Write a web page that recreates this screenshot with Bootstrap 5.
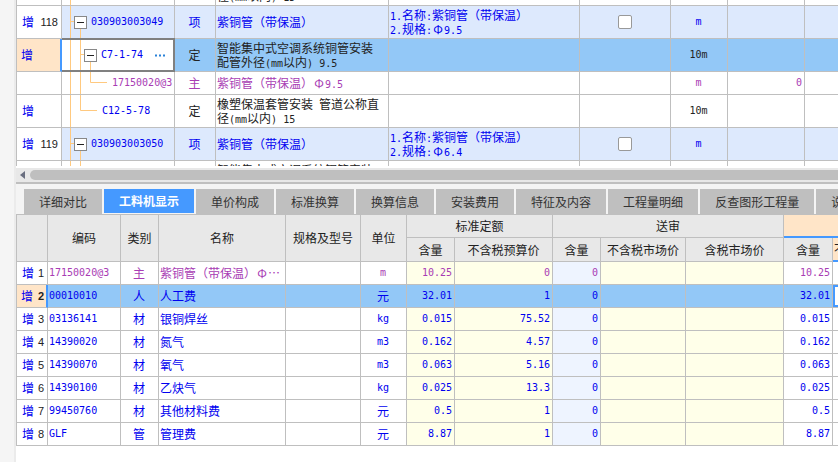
<!DOCTYPE html>
<html lang="zh-CN">
<head>
<meta charset="utf-8">
<meta name="viewport" content="width=device-width, initial-scale=1">
<title>工料机显示</title>
<link href="https://cdn.jsdelivr.net/npm/bootstrap@5.3.0/dist/css/bootstrap.min.css" rel="stylesheet">
<style>
:root{--line:#bfbfbf;--ink:#222;--blue:#0000f0;--plum:#a83cb4;--focus:#4599ff;--pick:#93c8f7;--peach:#ffe5c8}
body{font-family:"Noto Sans CJK SC",sans-serif;font-size:12px;line-height:14px;color:var(--ink);background:#fff}
.rail{width:16px;background:#f5f5f5;border-right:2px solid #ebebeb}
.mono{font-family:"DejaVu Sans Mono",monospace;font-size:10px;line-height:10px}
.phi{display:inline-block;width:12px;line-height:12px;text-align:center}
.grid{table-layout:fixed;width:100%;border-collapse:separate;border-spacing:0;white-space:nowrap}
.grid td,.grid th{padding:0 2px;border:0 solid var(--line);border-width:0 1px 1px 0;overflow:hidden;font-weight:400;vertical-align:middle}
.grid td{padding:0 2px 1px 1px}
.grid td:last-child,.grid th.hot,.grid th.hotsub{border-right-width:0}
.grid tr>.idx{border-left-width:1px;padding:0 3px 1px 5px;background:#fff}
.idx>div{color:var(--ink)}
.idx .tag,.codeblue{color:var(--blue)}
.idx .num{font-size:11px;font-family:"Liberation Sans",sans-serif}
.blue td{color:var(--blue)}
.plum td{color:var(--plum)}
.item td{background:#dde9fd}
.grid .pick td{background:var(--pick)}
.grid .pick .idx{background:var(--peach);border-right:2px solid var(--focus);padding-left:4px;padding-right:2px}
.bill{margin-top:-27px}
.bill-pane{height:166px}
.tall{height:33px}
.short{height:23px}
.grid .tree{padding:0}
.tree>div{height:32px}
.short .tree>div{height:22px}
.tree svg{overflow:visible;stroke:#ffc97f;fill:none}
.lv1{padding-left:12px}
.lv2{padding-left:22px}
.leaf2{padding-left:40px}
.leaf3{padding-left:50px}
.fold{position:relative;width:13px;height:13px;padding:0;margin-right:4px;border:1px solid #888;background:#fff;flex:none}
.fold::after{content:"";display:block;width:7px;height:1px;margin:auto;background:#222}
.more{border:0;background:none;padding:0}
.grid .pick .editing{background:#fff;border-color:#808080;box-shadow:0 -1px 0 #808080,inset -1px -1px 0 #808080,inset 0 1px 0 #808080}
.tick{appearance:none;width:14px;height:14px;border:1px solid #999;border-radius:2px;background:#fff;display:block;margin:auto}
.scroller{height:14px;background:#e8e8e8;margin-top:2px;padding:2px 0 2px 4px}
.arrow{border:0;background:none;padding:0;width:10px;height:10px;display:flex;align-items:center}
.thumb{height:10px;border-radius:5px 0 0 5px;background:var(--line)}
.tabs{background:#f4f4f4;border-top:2px solid var(--line);padding:5px 0 0 8px;gap:2px;height:32px}
.tabs button{flex:none;height:25px;padding:0 15px;border:0;background:var(--line);color:#333}
.tabs .on{height:24px;background:var(--focus);color:#fff;font-weight:700}
.res{border-top:1px solid var(--line)}
.grid.res th{background:#e8e8e8;text-align:center}
.grid.res .corner{border-left-width:1px}
.h1r{height:23px}
.h2r{height:24px}
.grid.res .hot{background:var(--peach);border-bottom:2px solid var(--focus)}
.grid.res .hotsub{background:var(--peach);border-bottom:2px solid var(--focus);text-align:left;padding:0 0 0 1px}
.cream{background:#ffffe9}
.ice{background:#eef4ff}
.n{text-align:right}
.grid .pick .focusbox{background:#fff;box-shadow:inset 2px 2px 0 var(--focus),inset 0 -2px 0 var(--focus)}
</style>
<script src="https://cdn.jsdelivr.net/npm/bootstrap@5.3.0/dist/js/bootstrap.bundle.min.js"></script>
</head>
<body class="overflow-hidden">
<div class="d-flex min-vh-100">
<aside class="rail flex-shrink-0"></aside>
<main class="flex-grow-1 overflow-hidden">
<section class="bill-pane overflow-hidden">
<table class="grid bill">
<colgroup><col width="46"><col width="113"><col width="41"><col width="173"><col width="191"><col width="91"><col width="57"><col width="77"><col></colgroup>
<tbody>
<tr class="tall"><td class="idx"></td><td class="tree"><div class="position-relative"><svg class="position-absolute top-0 start-0" width="40" height="32"><path d="M8.5 0V33"/></svg></div></td><td></td><td>橡塑保温套管安装<span class="mono"> </span>管道公称直<br>径<span class="mono">(mm</span>以内<span class="mono">) 15</span></td><td></td><td></td><td></td><td></td><td></td></tr>
<tr class="tall blue item"><td class="idx"><div class="d-flex justify-content-between"><span class="tag">增</span><span class="num">118</span></div></td>
<td class="tree"><div class="position-relative d-flex align-items-center lv1"><svg class="position-absolute top-0 start-0" width="40" height="32"><path d="M8.5 0V33M8.5 15.5H12M18.5 22V33"/></svg><button class="fold" aria-label="折叠"></button><span class="mono">030903003049</span></div></td>
<td class="text-center">项</td><td>紫铜管（带保温）</td><td><span class="mono">1.</span>名称<span class="mono">:</span>紫铜管（带保温）<br><span class="mono">2.</span>规格<span class="mono">:</span><span class="phi">Φ</span><span class="mono">9.5</span></td><td><input class="tick" type="checkbox" aria-label="118"></td><td class="text-center mono">m</td><td></td><td></td></tr>
<tr class="tall pick"><td class="idx"><span class="tag">增</span></td>
<td class="tree editing"><div class="position-relative d-flex align-items-center lv2"><svg class="position-absolute top-0 start-0" width="40" height="32"><path d="M8.5 1V31M18.5 1V31M18.5 15.5H22M28.5 22V31"/></svg><button class="fold" aria-label="折叠"></button><span class="mono codeblue">C7-1-74</span><button class="more ms-auto me-2" aria-label="更多"><svg class="d-block" width="11" height="3" viewBox="0 0 11 3"><path d="M0 1.5H2M4 1.5H6M8 1.5H10" stroke="#2a82d8" stroke-width="2"/></svg></button></div></td>
<td class="text-center">定</td><td>智能集中式空调系统铜管安装<br>配管外径<span class="mono">(mm</span>以内<span class="mono">) 9.5</span></td><td></td><td></td><td class="text-center mono">10m</td><td></td><td></td></tr>
<tr class="short plum"><td class="idx"></td>
<td class="tree"><div class="position-relative d-flex align-items-center leaf3"><svg class="position-absolute top-0 start-0" width="40" height="22"><path d="M8.5 0V23M18.5 0V23M28.5 0V10.5H45"/></svg><span class="mono">17150020@3</span></div></td>
<td class="text-center">主</td><td>紫铜管（带保温）<span class="phi">Φ</span><span class="mono">9.5</span></td><td></td><td></td><td class="text-center mono">m</td><td class="n mono">0</td><td></td></tr>
<tr class="tall"><td class="idx"><span class="tag">增</span></td>
<td class="tree"><div class="position-relative d-flex align-items-center leaf2"><svg class="position-absolute top-0 start-0" width="40" height="32"><path d="M8.5 0V33M18.5 0V15.5H35"/></svg><span class="mono codeblue">C12-5-78</span></div></td>
<td class="text-center">定</td><td>橡塑保温套管安装<span class="mono"> </span>管道公称直<br>径<span class="mono">(mm</span>以内<span class="mono">) 15</span></td><td></td><td></td><td class="text-center mono">10m</td><td></td><td></td></tr>
<tr class="tall blue item"><td class="idx"><div class="d-flex justify-content-between"><span class="tag">增</span><span class="num">119</span></div></td>
<td class="tree"><div class="position-relative d-flex align-items-center lv1"><svg class="position-absolute top-0 start-0" width="40" height="32"><path d="M8.5 0V33M8.5 15.5H12M18.5 22V33"/></svg><button class="fold" aria-label="折叠"></button><span class="mono">030903003050</span></div></td>
<td class="text-center">项</td><td>紫铜管（带保温）</td><td><span class="mono">1.</span>名称<span class="mono">:</span>紫铜管（带保温）<br><span class="mono">2.</span>规格<span class="mono">:</span><span class="phi">Φ</span><span class="mono">6.4</span></td><td><input class="tick" type="checkbox" aria-label="119"></td><td class="text-center mono">m</td><td></td><td></td></tr>
<tr class="tall"><td class="idx"></td><td class="tree"><div class="position-relative"><svg class="position-absolute top-0 start-0" width="40" height="32"><path d="M8.5 0V33M18.5 0V33"/></svg></div></td><td></td><td>智能集中式空调系统铜管安装<br>配管外径<span class="mono">(mm</span>以内<span class="mono">)</span></td><td></td><td></td><td></td><td></td><td></td></tr>
</tbody>
</table>
</section>
<div class="scroller d-flex"><button class="arrow" aria-label="向左滚动"><svg width="5" height="8"><path d="M5 0V8L0 4Z" fill="#6a6f80"/></svg></button><div class="thumb flex-grow-1"></div></div>
<nav class="tabs d-flex overflow-hidden">
<button>详细对比</button><button class="on">工料机显示</button><button>单价构成</button><button>标准换算</button><button>换算信息</button><button>安装费用</button><button>特征及内容</button><button>工程量明细</button><button>反查图形工程量</button><button>说明信息</button>
</nav>
<table class="grid res">
<colgroup><col width="32"><col width="73"><col width="38"><col width="127"><col width="75"><col width="46"><col width="48"><col width="98"><col width="48"><col width="85"><col width="98"><col width="49"><col></colgroup>
<thead>
<tr class="h1r"><th class="corner" rowspan="2"></th><th rowspan="2">编码</th><th rowspan="2">类别</th><th rowspan="2">名称</th><th rowspan="2">规格及型号</th><th rowspan="2">单位</th><th colspan="2">标准定额</th><th colspan="3">送审</th><th class="hot" colspan="2"></th></tr>
<tr class="h2r"><th>含量</th><th>不含税预算价</th><th>含量</th><th>不含税市场价</th><th>含税市场价</th><th>含量</th><th class="hotsub">不含税市场价</th></tr>
</thead>
<tbody>
<tr class="short plum"><td class="idx"><div class="d-flex justify-content-between"><span class="tag">增</span><span class="num">1</span></div></td><td class="mono">17150020@3</td><td class="text-center">主</td><td>紫铜管（带保温）<span class="phi">Φ</span>⋯</td><td></td><td class="text-center mono">m</td><td class="n mono cream">10.25</td><td class="n mono cream">0</td><td class="n mono ice">0</td><td class="cream"></td><td class="cream"></td><td class="n mono">10.25</td><td></td></tr>
<tr class="short blue pick"><td class="idx"><div class="d-flex justify-content-between"><span class="tag">增</span><span class="num fw-bold">2</span></div></td><td class="mono">00010010</td><td class="text-center">人</td><td>人工费</td><td></td><td class="text-center">元</td><td class="n mono">32.01</td><td class="n mono">1</td><td class="n mono">0</td><td></td><td></td><td class="n mono">32.01</td><td class="focusbox"></td></tr>
<tr class="short blue"><td class="idx"><div class="d-flex justify-content-between"><span class="tag">增</span><span class="num">3</span></div></td><td class="mono">03136141</td><td class="text-center">材</td><td>银铜焊丝</td><td></td><td class="text-center mono">kg</td><td class="n mono cream">0.015</td><td class="n mono cream">75.52</td><td class="n mono ice">0</td><td class="cream"></td><td class="cream"></td><td class="n mono">0.015</td><td></td></tr>
<tr class="short blue"><td class="idx"><div class="d-flex justify-content-between"><span class="tag">增</span><span class="num">4</span></div></td><td class="mono">14390020</td><td class="text-center">材</td><td>氮气</td><td></td><td class="text-center mono">m3</td><td class="n mono cream">0.162</td><td class="n mono cream">4.57</td><td class="n mono ice">0</td><td class="cream"></td><td class="cream"></td><td class="n mono">0.162</td><td></td></tr>
<tr class="short blue"><td class="idx"><div class="d-flex justify-content-between"><span class="tag">增</span><span class="num">5</span></div></td><td class="mono">14390070</td><td class="text-center">材</td><td>氧气</td><td></td><td class="text-center mono">m3</td><td class="n mono cream">0.063</td><td class="n mono cream">5.16</td><td class="n mono ice">0</td><td class="cream"></td><td class="cream"></td><td class="n mono">0.063</td><td></td></tr>
<tr class="short blue"><td class="idx"><div class="d-flex justify-content-between"><span class="tag">增</span><span class="num">6</span></div></td><td class="mono">14390100</td><td class="text-center">材</td><td>乙炔气</td><td></td><td class="text-center mono">kg</td><td class="n mono cream">0.025</td><td class="n mono cream">13.3</td><td class="n mono ice">0</td><td class="cream"></td><td class="cream"></td><td class="n mono">0.025</td><td></td></tr>
<tr class="short blue"><td class="idx"><div class="d-flex justify-content-between"><span class="tag">增</span><span class="num">7</span></div></td><td class="mono">99450760</td><td class="text-center">材</td><td>其他材料费</td><td></td><td class="text-center">元</td><td class="n mono cream">0.5</td><td class="n mono cream">1</td><td class="n mono ice">0</td><td class="cream"></td><td class="cream"></td><td class="n mono">0.5</td><td></td></tr>
<tr class="short blue"><td class="idx"><div class="d-flex justify-content-between"><span class="tag">增</span><span class="num">8</span></div></td><td class="mono">GLF</td><td class="text-center">管</td><td>管理费</td><td></td><td class="text-center">元</td><td class="n mono cream">8.87</td><td class="n mono cream">1</td><td class="n mono ice">0</td><td class="cream"></td><td class="cream"></td><td class="n mono">8.87</td><td></td></tr>
</tbody>
</table>
</main>
</div>
</body>
</html>
